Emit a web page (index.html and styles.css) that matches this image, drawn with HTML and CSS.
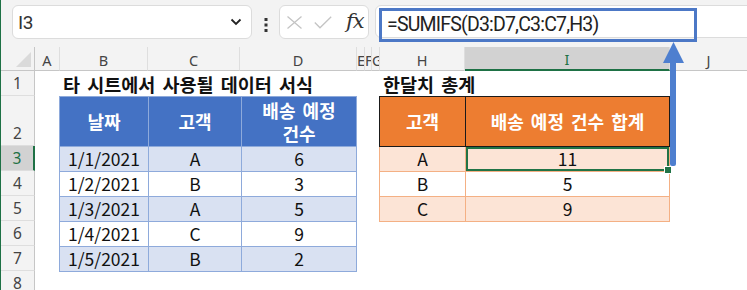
FILE: index.html
```html
<!DOCTYPE html>
<html>
<head>
<meta charset="utf-8">
<link rel="stylesheet" href="styles.css">
</head>
<body>
<div class="app">
  <div class="toolbar">
    <div class="namebox">
      <span class="nametext">I3</span>
      <svg class="chev" width="12" height="8" viewBox="0 0 12 8"><path d="M1.5 1.5 L6 6 L10.5 1.5" fill="none" stroke="#222" stroke-width="1.8"/></svg>
    </div>
    <svg class="dots" width="4" height="14" viewBox="0 0 4 14"><rect x="0.5" y="0" width="3" height="3" fill="#333"/><rect x="0.5" y="5.5" width="3" height="3" fill="#333"/><rect x="0.5" y="11" width="3" height="3" fill="#333"/></svg>
    <div class="fxbox">
      <svg width="17" height="13" viewBox="0 0 17 13"><path d="M1.5 0.5 L15.5 12.5 M15.5 0.5 L1.5 12.5" stroke="#c4c4c4" stroke-width="1.3" fill="none"/></svg>
      <svg width="18" height="13" viewBox="0 0 18 13"><path d="M0.8 6.5 L6 11.8 L17.2 0.8" stroke="#c4c4c4" stroke-width="1.3" fill="none"/></svg>
      <span class="fx">fx</span>
    </div>
    <div class="formula">
      <span class="ftext">=SUMIFS(D3:D7,C3:C7,H3)</span>
      <div class="hl"></div>
    </div>
  </div>

  <div class="sheet">
    <div class="corner"><div class="tri"></div></div>
    <div class="ch">A</div>
    <div class="ch">B</div>
    <div class="ch">C</div>
    <div class="ch">D</div>
    <div class="ch narrow">E</div>
    <div class="ch narrow">F</div>
    <div class="ch narrow">G</div>
    <div class="ch">H</div>
    <div class="ch sel">I</div>
    <div class="ch last">J</div>

    <div class="rh r1">1</div>
    <div class="rh r2">2</div>
    <div class="rh r3 sel">3</div>
    <div class="rh r4">4</div>
    <div class="rh r5">5</div>
    <div class="rh r6">6</div>
    <div class="rh r7">7</div>
    <div class="rh r8">8</div>

    <div class="title t1">타 시트에서 사용될 데이터 서식</div>
    <div class="title t2">한달치 총계</div>

    <table class="tbl blue">
      <tr class="head"><td class="cb">날짜</td><td class="cc">고객</td><td class="cd">배송 예정<br>건수</td></tr>
      <tr class="band"><td>1/1/2021</td><td>A</td><td>6</td></tr>
      <tr><td>1/2/2021</td><td>B</td><td>3</td></tr>
      <tr class="band"><td>1/3/2021</td><td>A</td><td>5</td></tr>
      <tr><td>1/4/2021</td><td>C</td><td>9</td></tr>
      <tr class="band"><td>1/5/2021</td><td>B</td><td>2</td></tr>
    </table>

    <table class="tbl orange">
      <tr class="head"><td class="ch2">고객</td><td class="ci">배송 예정 건수 합계</td></tr>
      <tr class="band"><td>A</td><td class="active">11<span class="handle"></span></td></tr>
      <tr><td>B</td><td>5</td></tr>
      <tr class="band"><td>C</td><td>9</td></tr>
    </table>

    <svg class="arrow" width="24" height="128" viewBox="0 0 24 128">
      <polygon points="11.5,0 22,21 1,21" fill="#4e7fcf"/>
      <rect x="8" y="18" width="6" height="106" rx="2" fill="#4e7fcf"/>
    </svg>
  </div>
</div>
</body>
</html>
```

FILE: styles.css
```css
html, body {
  margin: 0;
  padding: 0;
  background: #ffffff;
}
body {
  width: 747px;
  height: 290px;
  overflow: hidden;
}
.app {
  position: relative;
  width: 746px;
  height: 290px;
  border-left: 1px solid #1e7145;
  overflow: hidden;
  font-family: "Noto Sans CJK KR", "Noto Sans", sans-serif;
}

/* ---------- toolbar ---------- */
.toolbar {
  height: 47px;
  background: #f3f3f3;
  display: flex;
  align-items: flex-start;
  box-sizing: border-box;
  padding-top: 5px;
  overflow: hidden;
}
.toolbar > * {
  flex: none;
}
.namebox {
  margin-left: 11px;
  width: 240px;
  height: 34px;
  box-sizing: border-box;
  background: #fff;
  border: 1px solid #dcdcdc;
  border-radius: 6px;
  display: flex;
  align-items: center;
  justify-content: space-between;
  padding: 0 9px 0 5px;
}
.nametext {
  font-family: Roboto, "Noto Sans", sans-serif;
  font-size: 19px;
  color: #333;
  letter-spacing: -0.5px;
}
.dots {
  margin: 13px 0 0 12px;
}
.fxbox {
  margin-left: 11px;
  width: 90px;
  height: 34px;
  box-sizing: border-box;
  background: #fff;
  border: 1px solid #dcdcdc;
  border-radius: 6px;
  display: flex;
  align-items: center;
  padding: 0 0 0 6px;
}
.fxbox svg:first-child { margin-right: 11px; }
.fxbox svg:nth-child(2) { margin-right: 14px; }
.fx {
  font-family: "DejaVu Serif", "Liberation Serif", serif;
  font-style: italic;
  font-size: 21px;
  color: #333;
  letter-spacing: -1px;
  margin-top: -2px;
}
.formula {
  position: relative;
  margin-left: 6px;
  width: 400px;
  height: 33px;
  box-sizing: border-box;
  background: #fff;
  border: 1px solid #dcdcdc;
  border-radius: 6px;
  display: flex;
  align-items: center;
  padding-left: 11px;
}
.ftext {
  font-family: Roboto, "Noto Sans", sans-serif;
  font-size: 19.5px;
  letter-spacing: -0.8px;
  color: #222;
  margin-top: 5px;
}
.hl {
  position: absolute;
  left: 3px;
  top: 2px;
  width: 318px;
  height: 34px;
  box-sizing: border-box;
  border: 3px solid #4c78c6;
}

/* ---------- sheet ---------- */
.sheet {
  position: relative;
  display: grid;
  grid-template-columns: 34px 25px 88px 92px 117px 8px 7px 8px 85px 205px 1fr;
  grid-template-rows: 24px 25px 50px 25px 25px 25px 25px 25px 25px;
}
.corner {
  grid-row: 1;
  grid-column: 1;
  background: #f3f3f3;
  border-bottom: 1px solid #c6c6c6;
  border-right: 1px solid #c6c6c6;
  position: relative;
}
.tri {
  position: absolute;
  right: 3px;
  bottom: 3px;
  width: 0;
  height: 0;
  border-left: 15px solid transparent;
  border-bottom: 15px solid #dadada;
}
.ch {
  grid-row: 1;
  background: #f3f3f3;
  border-bottom: 1px solid #c6c6c6;
  border-right: 1px solid #dedede;
  font-family: "Noto Sans", sans-serif;
  font-size: 14.5px;
  color: #444;
  display: flex;
  align-items: center;
  justify-content: center;
  overflow: hidden;
  padding-top: 2px;
  box-sizing: border-box;
}
.ch.narrow {
  justify-content: flex-start;
  letter-spacing: -1px;
}
.ch.sel {
  background: #d2d2d2;
  color: #1e7145;
  border-bottom: 2px solid #1e7145;
}
.ch.last { border-right: none; }

.rh {
  grid-column: 1;
  background: #f3f3f3;
  border-right: 1px solid #c6c6c6;
  border-bottom: 1px solid #dedede;
  font-family: "Noto Sans", sans-serif;
  font-size: 15.5px;
  color: #444;
  display: flex;
  align-items: flex-end;
  justify-content: center;
  padding-bottom: 1px;
  box-sizing: border-box;
}
.rh.sel {
  background: #d2d2d2;
  color: #1e7145;
  border-right: 2px solid #1e7145;
}
.r1 { grid-row: 2; }
.r2 { grid-row: 3; }
.r3 { grid-row: 4; }
.r4 { grid-row: 5; }
.r5 { grid-row: 6; }
.r6 { grid-row: 7; }
.r7 { grid-row: 8; }
.r8 { grid-row: 9; }

.title {
  grid-row: 2;
  font-weight: bold;
  font-size: 18.5px;
  word-spacing: 3px;
  color: #111;
  white-space: nowrap;
  display: flex;
  align-items: center;
}
.t1 { grid-column: 3 / 8; padding-left: 3px; }
.t2 { grid-column: 9 / 11; padding-left: 3px; }

/* ---------- tables ---------- */
.tbl {
  border-collapse: collapse;
  table-layout: fixed;
  font-size: 17.5px;
  color: #111;
  align-self: start;
}
.tbl td {
  text-align: center;
  vertical-align: middle;
  height: 24px;
  padding: 0;
  line-height: 20px;
}
.tbl .head td {
  height: 49px;
  color: #fff;
  font-weight: bold;
  font-size: 18px;
  word-spacing: 3px;
  line-height: 23px;
}
.blue {
  grid-column: 3 / 6;
  grid-row: 3 / 9;
  width: 298px;
  margin-left: -1px;
  margin-top: 0;
}
.blue td { border: 1px solid #8eaadb; }
.blue .head td { background: #4472c4; }
.blue .band td { background: #d9e1f2; }
.blue .cb { width: 88px; }
.blue .cc { width: 92px; }

.orange {
  grid-column: 9 / 11;
  grid-row: 3 / 7;
  width: 291px;
  margin-left: -1px;
}
.orange td { border: 1px solid #f4b084; }
.orange .head td { background: #ed7d31; border: 1px solid #1a1a1a; }
.orange .band td { background: #fce4d6; }
.orange .ch2 { width: 85px; }

.orange td.active {
  position: relative;
  box-shadow: inset 0 0 0 2px #217346;
}
.handle {
  position: absolute;
  right: -3px;
  bottom: -3px;
  width: 6px;
  height: 6px;
  background: #217346;
  border: 1px solid #fff;
}

.arrow {
  position: absolute;
  left: 661px;
  top: -5px;
}
```
